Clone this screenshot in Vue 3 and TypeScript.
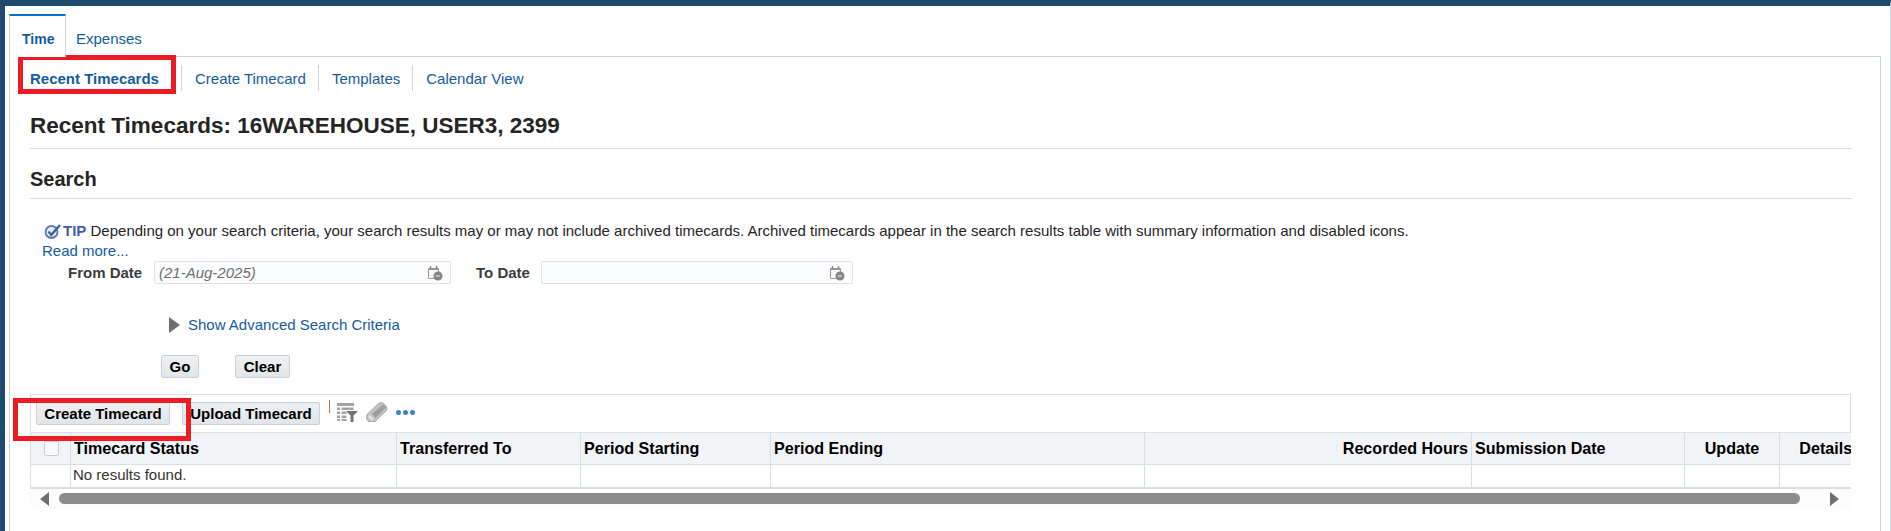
<script setup lang="ts">
interface Col { label: string; width: number; align: string }
const cols: Col[] = [
  { label: 'Timecard Status', width: 326, align: 'left' },
  { label: 'Transferred To', width: 184, align: 'left' },
  { label: 'Period Starting', width: 190, align: 'left' },
  { label: 'Period Ending', width: 374, align: 'left' },
  { label: 'Recorded Hours', width: 327, align: 'right' },
  { label: 'Submission Date', width: 213, align: 'left' },
  { label: 'Update', width: 95, align: 'center' },
  { label: 'Details', width: 92, align: 'center' },
]
const subnav = ['Create Timecard', 'Templates', 'Calendar View']
</script>

<template>
  <div class="page">
    <div class="tabs">
      <div class="tab active">Time</div>
      <div class="tab">Expenses</div>
    </div>
    <div class="panel">
      <nav class="subnav">
        <span class="sub first">Recent Timecards</span>
        <span v-for="s in subnav" :key="s" class="sub">{{ s }}</span>
      </nav>
      <span class="redbox box-top"></span>

      <h1 class="title">Recent Timecards: 16WAREHOUSE, USER3, 2399</h1>
      <h2 class="section">Search</h2>

      <p class="tip">
        <svg class="tipicon" width="18" height="17" viewBox="0 0 18 17">
          <circle cx="7.500" cy="9" r="6" fill="#e9edf6" stroke="#5b78b8" stroke-width="1.800" />
          <path d="M4.500 8.500l2.800 3.400L16 2" fill="none" stroke="#3f5ea6" stroke-width="2.400" />
        </svg>
        <b>TIP</b> Depending on your search criteria, your search results may or may not include archived timecards. Archived timecards appear in the search results table with summary information and disabled icons.
      </p>
      <a class="readmore">Read more...</a>

      <div class="fields">
        <label class="flabel from">From Date</label>
        <div class="input first-input">
          <span class="placeholder">(21-Aug-2025)</span>
          <svg class="cal" width="16" height="16" viewBox="0 0 16 16">
            <path d="M1.500 3.500h10v10h-10z" fill="#f7f7f7" stroke="#999" />
            <path d="M1.500 3h10v2h-10z" fill="#999" />
            <path d="M3.500 1v3M9.500 1v3" stroke="#888" stroke-width="1.400" />
            <circle cx="11" cy="11" r="4.500" fill="#858585" />
            <path d="M8.800 11h4" stroke="#fff" stroke-width="1" />
          </svg>
        </div>
        <label class="flabel to">To Date</label>
        <div class="input second-input">
          <svg class="cal" width="16" height="16" viewBox="0 0 16 16">
            <path d="M1.500 3.500h10v10h-10z" fill="#f7f7f7" stroke="#999" />
            <path d="M1.500 3h10v2h-10z" fill="#999" />
            <path d="M3.500 1v3M9.500 1v3" stroke="#888" stroke-width="1.400" />
            <circle cx="11" cy="11" r="4.500" fill="#858585" />
            <path d="M8.800 11h4" stroke="#fff" stroke-width="1" />
          </svg>
        </div>
      </div>

      <div class="advanced">
        <span class="tri"></span>
        <a class="link">Show Advanced Search Criteria</a>
      </div>

      <div class="actions">
        <button class="btn go">Go</button>
        <button class="btn clear">Clear</button>
      </div>

      <div class="results">
        <div class="toolbar">
          <button class="btn create">Create Timecard</button>
          <button class="btn upload">Upload Timecard</button>
          <span class="tsep"></span>
          <svg class="ticon" width="21" height="20" viewBox="0 0 21 20">
            <path d="M0 1h17v3H0zM0 5.500h3v2.500H0zM4.500 5.500h12v2.500h-12zM0 9.500h3v2.500H0zM4.500 9.500h5v2.500h-5zM0 13.500h3v2.500H0zM4.500 13.500h5v2.500h-5zM0 17h3v2H0zM4.500 17h5v2h-5z" fill="#a3a3a3" />
            <path d="M9 9h12l-4.500 4.500V20h-3v-6.500z" fill="#737373" />
          </svg>
          <svg class="ticon pencil" width="22" height="20" viewBox="0 0 22 20">
            <path d="M1 12.500L12 2a4 4 0 0 1 6 0l2 2a4 4 0 0 1 0 5L9 19.500l-6 .5-2.500-3z" fill="#c4c4c4" stroke="#a6a6a6" />
            <path d="M6 12L17 2.500l3 3L9.500 16z" fill="#9e9e9e" />
            <path d="M3 14l4 4" stroke="#e8e8e8" stroke-width="1.800" />
          </svg>
          <span class="dots"><i></i><i></i><i></i></span>
        </div>

        <div class="gridwrap">
          <table class="grid">
            <colgroup>
              <col class="c0" />
              <col v-for="c in cols" :key="c.label" :style="{ width: c.width + 'px' }" />
            </colgroup>
            <thead>
              <tr>
                <th class="chk"><span class="checkbox"></span></th>
                <th v-for="c in cols" :key="c.label" :style="{ textAlign: c.align }">{{ c.label }}</th>
              </tr>
            </thead>
            <tbody>
              <tr>
                <td></td>
                <td class="none">No results found.</td>
                <td v-for="n in 7" :key="n"></td>
              </tr>
            </tbody>
          </table>
        </div>

        <div class="scroll">
          <span class="arrow left"></span>
          <span class="thumb"></span>
          <span class="arrow right"></span>
        </div>
      </div>
      <span class="redbox box-bottom"></span>
    </div>
  </div>
</template>

<style>
html, body { margin: 0; background: #fff; }
</style>

<style scoped>
.page {
  box-sizing: border-box;
  width: 1891px;
  height: 531px;
  overflow: hidden;
  background: #fff;
  border-top: 6px solid #1f4a6e;
  border-left: 5px solid #1f4a6e;
  border-right: 1px solid #c9d5e0;
  padding: 8px 9px 0 4px;
  font-family: "Liberation Sans", Arial, sans-serif;
  font-size: 15px;
  color: #252525;
}
.tabs { display: flex; height: 43px; position: relative; z-index: 1; }
.tab { padding: 15px 11px 0; color: #145c9e; line-height: 20px; font-size: 15px; }
.tab.active {
  box-sizing: border-box;
  width: 57px;
  height: 43px;
  padding: 13px 0 0 12px;
  background: #fff;
  border-top: 2px solid #0572ce;
  border-left: 1px solid #c9d5e0;
  border-right: 1px solid #c9d5e0;
  font-weight: 700;
  font-size: 14px;
}
.tab:nth-child(2) { padding-left: 10px; }
.panel {
  position: relative;
  height: 480px;
  box-sizing: border-box;
  margin-top: -1px;
  border: 1px solid #c9d5e0;
  border-bottom: 0;
  padding-left: 20px;
  padding-right: 28px;
}
.subnav { display: flex; align-items: stretch; margin-top: 8px; height: 26px; color: #145c9e; font-size: 15px; }
.sub { padding: 0 12px 0 13px; border-right: 1px solid #c9d5e0; line-height: 28px; }
.sub:last-child { border-right: 0; }
.sub.first { box-sizing: content-box; width: 151px; padding: 0; font-weight: 700; font-size: 15px; }
.redbox { position: absolute; box-sizing: border-box; border: 5px solid #ed1c24; pointer-events: none; }
.box-top { left: 8px; top: -2px; width: 158px; height: 39px; }
.box-bottom { left: 3px; top: 341px; width: 178px; height: 43px; }
.title { margin: 20px 0 0; padding: 0 0 7px; font-size: 22.5px; line-height: 30px; font-weight: 700; border-bottom: 1px solid #d6dfe6; color: #252525; }
.section { margin: 18px 0 0; padding: 0 0 7px; font-size: 20px; line-height: 24px; font-weight: 700; border-bottom: 1px solid #d6dfe6; color: #252525; }
.tip { display: flex; align-items: center; margin: 22px 0 0 14px; height: 20px; white-space: pre-wrap; line-height: 20px; font-size: 15px; }
.tipicon { margin-right: 1px; flex: none; }
.tip b { color: #3f5ea6; }
.readmore { display: block; margin-left: 12px; height: 20px; line-height: 20px; color: #145c9e; font-size: 15px; }
.fields { display: flex; align-items: center; height: 23px; margin-top: 0; }
.flabel { font-weight: 700; color: #3c3c3c; font-size: 15px; }
.from { margin-left: 38px; width: 86px; }
.to { margin-left: 25px; width: 65px; }
.input { box-sizing: border-box; display: flex; align-items: center; height: 23px; border: 1px solid #dfe4ea; border-radius: 2px; background: #fbfcfd; padding: 0 7px 0 4px; }
.first-input { width: 297px; }
.second-input { width: 312px; justify-content: flex-end; }
.placeholder { flex: 1; font-style: italic; color: #6f6f6f; font-size: 15px; }
.cal { flex: none; }
.advanced { display: flex; align-items: center; height: 20px; margin-top: 31px; margin-left: 139px; }
.tri { width: 0; height: 0; border-left: 11px solid #6f6f6f; border-top: 8px solid transparent; border-bottom: 8px solid transparent; margin-right: 8px; }
.link { color: #145c9e; font-size: 15px; padding-bottom: 2px; }
.actions { display: flex; height: 23px; margin-top: 20px; margin-left: 131px; }
.btn {
  box-sizing: border-box;
  height: 23px;
  padding: 0;
  border: 1px solid #c8d1d9;
  border-radius: 2px;
  background: linear-gradient(#eef0f2, #e2e6e9);
  font-family: inherit;
  font-weight: 700;
  font-size: 15px;
  color: #000;
}
.go { width: 38px; }
.clear { width: 55px; margin-left: 36px; }
.results { margin-top: 16px; width: 1821px; }
.toolbar { box-sizing: border-box; display: flex; align-items: flex-start; height: 38px; border: 1px solid #d6dfe6; border-bottom: 0; padding: 7px 0 0 5px; }
.create { width: 134px; }
.upload { width: 138px; margin-left: 12px; }
.tsep { width: 1px; height: 13px; margin: -2px 0 0 9px; background: #b5734a; }
.ticon { margin-left: 7px; margin-top: 0; flex: none; }
.pencil { margin-left: 8px; }
.dots { display: flex; gap: 2px; margin: 8px 0 0 8px; }
.dots i { width: 5px; height: 5px; border-radius: 50%; background: #3a84c0; }
.gridwrap { overflow: hidden; width: 1821px; }
.grid { table-layout: fixed; width: 1841px; border-collapse: collapse; }
.c0 { width: 40px; }
th, td { border: 1px solid #d6dfe6; padding: 0 3px 0 3px; overflow: hidden; white-space: nowrap; }
th:last-child, td:last-child { border-right: 0; overflow: visible; }
th { height: 31px; background: #f1f3f7; font-weight: 700; font-size: 16.1px; color: #000; }
td { height: 23px; padding-bottom: 2px; box-sizing: border-box; font-size: 15px; color: #333; border-bottom-width: 2px; }
.chk { padding: 0 0 0 13px; text-align: left; }
.checkbox { display: block; box-sizing: border-box; width: 15px; height: 15px; border: 1px solid #c4ced7; border-radius: 2px; background: #f8f9fa; }
.none { padding-left: 2px; }
.scroll { display: flex; align-items: center; height: 20px; background: #fcfcfc; padding: 0 0 0 10px; margin-top: 0; }
.thumb { width: 1741px; height: 11px; border-radius: 6px; background: #8c8c8c; margin-left: 10px; }
.arrow { width: 0; height: 0; border-top: 7px solid transparent; border-bottom: 7px solid transparent; }
.arrow.left { border-right: 9px solid #6f6f6f; }
.arrow.right { border-left: 9px solid #6f6f6f; margin-left: 30px; }
</style>
